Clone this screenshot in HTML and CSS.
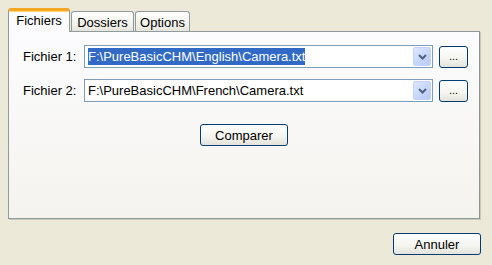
FILE: index.html
```html
<!DOCTYPE html>
<html>
<head>
<meta charset="utf-8">
<link rel="stylesheet" href="styles.css">
</head>
<body>
<div class="win">
  <div class="tabs">
    <div class="tab sel">Fichiers</div>
    <div class="tab t2">Dossiers</div>
    <div class="tab t3">Options</div>
  </div>
  <div class="panel">
    <div class="row">
      <span class="label">Fichier 1:</span>
      <div class="combo">
        <span class="val"><span class="hl">F:\PureBasicCHM\English\Camera.txt</span></span>
        <span class="drop"><svg width="9" height="6" viewBox="0 0 9 6"><path d="M1 1 L4.5 4.5 L8 1" fill="none" stroke="#4d6185" stroke-width="2"/></svg></span>
      </div>
      <div class="btn small">...</div>
    </div>
    <div class="row">
      <span class="label">Fichier 2:</span>
      <div class="combo">
        <span class="val">F:\PureBasicCHM\French\Camera.txt</span>
        <span class="drop"><svg width="9" height="6" viewBox="0 0 9 6"><path d="M1 1 L4.5 4.5 L8 1" fill="none" stroke="#4d6185" stroke-width="2"/></svg></span>
      </div>
      <div class="btn small">...</div>
    </div>
    <div class="center">
      <div class="btn wide">Comparer</div>
    </div>
  </div>
  <div class="footer">
    <div class="btn wide">Annuler</div>
  </div>
</div>
</body>
</html>
```

FILE: styles.css
```css
html, body {
  margin: 0;
  padding: 0;
  background: #ece9d8;
  font-family: "Liberation Sans", Arial, sans-serif;
  font-size: 13px;
  color: #000;
}
.win {
  width: 492px;
  height: 265px;
  padding: 8px 0 0 8px;
  box-sizing: border-box;
}
.tabs {
  display: flex;
  align-items: flex-end;
  height: 23px;
  position: relative;
  z-index: 2;
}
.tab {
  box-sizing: border-box;
  height: 20px;
  border: 1px solid #919b9c;
  border-bottom: none;
  border-radius: 3px 3px 0 0;
  background: linear-gradient(#ffffff, #f0f0ea 70%, #e4e3dc);
  display: flex;
  align-items: center;
  justify-content: center;
  padding-top: 1px;
  margin-left: 1px;
}
.tab.sel {
  height: 24px;
  width: 62px;
  margin-left: 0;
  margin-bottom: -1px;
  background: #fcfcfe;
  border-top: 3px solid #f5a623;
  box-shadow: inset 0 1px 0 #ffd77a;
  padding-top: 0;
  padding-bottom: 2px;
}
.tab.t2 { width: 63px; }
.tab.t3 { width: 55px; }
.panel {
  box-sizing: border-box;
  width: 472px;
  height: 188px;
  border: 1px solid #919b9c;
  border-right-color: #8c9394;
  box-shadow: 1px 1px 0 #c8c6bd;
  background: linear-gradient(#fcfcfe, #f4f3ee);
  padding: 13px 0 0 14px;
  position: relative;
  z-index: 1;
}
.row {
  display: flex;
  align-items: center;
  height: 23px;
  margin-bottom: 11px;
}
.label {
  width: 61px;
}
.combo {
  box-sizing: border-box;
  width: 349px;
  height: 23px;
  border: 1px solid #7f9db9;
  background: #fff;
  display: flex;
  align-items: center;
  justify-content: space-between;
  padding: 1px;
}
.val {
  padding-left: 2px;
  line-height: 17px;
}
.hl {
  background: #316ac5;
  color: #fff;
  display: inline-block;
  line-height: 17px;
}
.drop {
  box-sizing: border-box;
  width: 18px;
  height: 19px;
  border: 1px solid #c3d3fd;
  border-radius: 2px;
  background: linear-gradient(135deg, #dce7ff, #b6cbf8);
  display: flex;
  align-items: center;
  justify-content: center;
}
.btn {
  box-sizing: border-box;
  border: 1px solid #003c74;
  border-radius: 3px;
  background: linear-gradient(#ffffff, #f4f4f0 60%, #e3e3db);
  display: flex;
  align-items: center;
  justify-content: center;
  height: 22px;
}
.btn.small {
  width: 29px;
  margin-left: 6px;
  font-size: 11px;
  padding-bottom: 2px;
}
.btn.wide {
  width: 88px;
}
.center {
  display: flex;
  justify-content: center;
  padding-right: 14px;
  margin-top: 22px;
}
.footer {
  display: flex;
  justify-content: flex-end;
  padding-right: 11px;
  margin-top: 14px;
}
```
